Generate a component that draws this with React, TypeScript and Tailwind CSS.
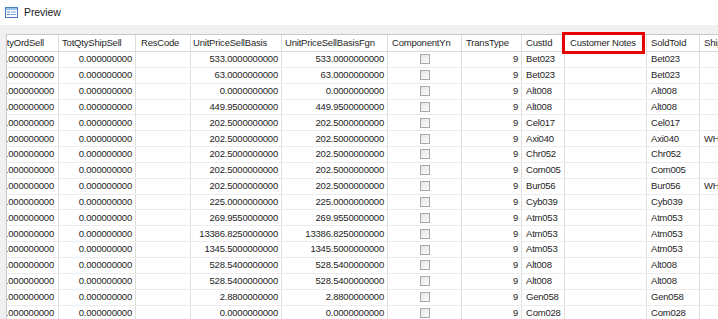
import React from "react";

type Row = {
  a: string;
  b: string;
  price: string;
  cust: string;
  ship?: string;
};

const rows: Row[] = [
  { a: "1.000000000", b: "0.000000000", price: "533.0000000000", cust: "Bet023" },
  { a: "1.000000000", b: "0.000000000", price: "63.0000000000", cust: "Bet023" },
  { a: "1.000000000", b: "0.000000000", price: "0.0000000000", cust: "Alt008" },
  { a: "1.000000000", b: "0.000000000", price: "449.9500000000", cust: "Alt008" },
  { a: "1.000000000", b: "0.000000000", price: "202.5000000000", cust: "Cel017" },
  { a: "1.000000000", b: "0.000000000", price: "202.5000000000", cust: "Axi040", ship: "WH01" },
  { a: "1.000000000", b: "0.000000000", price: "202.5000000000", cust: "Chr052" },
  { a: "1.000000000", b: "0.000000000", price: "202.5000000000", cust: "Com005" },
  { a: "1.000000000", b: "0.000000000", price: "202.5000000000", cust: "Bur056", ship: "WH01" },
  { a: "1.000000000", b: "0.000000000", price: "225.0000000000", cust: "Cyb039" },
  { a: "1.000000000", b: "0.000000000", price: "269.9550000000", cust: "Atm053" },
  { a: "1.000000000", b: "0.000000000", price: "13386.8250000000", cust: "Atm053" },
  { a: "1.000000000", b: "0.000000000", price: "1345.5000000000", cust: "Atm053" },
  { a: "1.000000000", b: "0.000000000", price: "528.5400000000", cust: "Alt008" },
  { a: "1.000000000", b: "0.000000000", price: "528.5400000000", cust: "Alt008" },
  { a: "1.000000000", b: "0.000000000", price: "2.8800000000", cust: "Gen058" },
  { a: "1.000000000", b: "0.000000000", price: "0.0000000000", cust: "Com028" },
];

const cell =
  "shrink-0 h-full border-r border-[#dedede] overflow-hidden whitespace-nowrap flex items-center";

function FormIcon() {
  return (
    <svg width="13" height="11" viewBox="0 0 13 11">
      <rect x="0.5" y="0.5" width="12" height="10" fill="#ffffff" stroke="#4a7fc1" />
      <rect x="1" y="1" width="11" height="2" fill="#9cc0e8" />
      <rect x="2" y="4.5" width="3" height="1" fill="#4a7fc1" />
      <rect x="2" y="7" width="3" height="1" fill="#4a7fc1" />
      <rect x="6" y="4.5" width="5" height="1" fill="#7aa4d6" />
      <rect x="6" y="7" width="5" height="1" fill="#7aa4d6" />
    </svg>
  );
}

function Checkbox() {
  return (
    <div className="w-[10px] h-[10px] border border-[#a8a8a8] bg-gradient-to-br from-[#e6e6e6] to-[#fbfbfb]" />
  );
}

export default function App() {
  return (
    <div
      className="relative w-[718px] h-[319px] overflow-hidden bg-[#f0f0f0] flex flex-col text-[#1e1e1e]"
      style={{ fontFamily: '"Liberation Sans", Arial, sans-serif' }}
    >
      <div className="h-[25px] shrink-0 bg-white flex items-center pl-[5px] gap-[6px]">
        <FormIcon />
        <span className="text-[10.5px] tracking-[-0.1px] text-[#1a1a1a]">Preview</span>
      </div>
      <div className="flex-1 pt-[9px] pl-[6px] overflow-hidden">
        <div className="bg-white border-l border-t border-[#c8c8c8] h-full overflow-hidden text-[9.5px] tracking-[-0.2px]">
          {/* header */}
          <div className="flex h-[17px] border-b border-[#dadada] text-[#262626]">
            <div className={`${cell} w-[52px] justify-end`}>
              <span className="pr-[14px]">TotQtyOrdSell</span>
            </div>
            <div className={`${cell} w-[77px] pl-[3px]`}>TotQtyShipSell</div>
            <div className={`${cell} w-[55px] pl-[5px]`}>ResCode</div>
            <div className={`${cell} w-[91px] pl-[2px]`}>UnitPriceSellBasis</div>
            <div className={`${cell} w-[106px] pl-[3px]`}>UnitPriceSellBasisFgn</div>
            <div className={`${cell} w-[74px] pl-[4px]`}>ComponentYn</div>
            <div className={`${cell} w-[60px] pl-[4px]`}>TransType</div>
            <div className={`${cell} w-[43px] pl-[4px]`}>CustId</div>
            <div className={`${cell} w-[82px] pl-[5px]`}>Customer Notes</div>
            <div className={`${cell} w-[53px] pl-[4px]`}>SoldToId</div>
            <div className={`${cell} w-[80px] pl-[4px]`}>ShipToAddr</div>
          </div>
          {rows.map((r, i) => (
            <div key={i} className="flex h-[15.85px] border-b border-[#ececec]">
              <div className={`${cell} w-[52px] justify-end pr-[4px]`}>{r.a}</div>
              <div className={`${cell} w-[77px] justify-end pr-[3px]`}>{r.b}</div>
              <div className={`${cell} w-[55px]`} />
              <div className={`${cell} w-[91px] justify-end pr-[3px]`}>{r.price}</div>
              <div className={`${cell} w-[106px] justify-end pr-[3px]`}>{r.price}</div>
              <div className={`${cell} w-[74px] justify-center`}>
                <Checkbox />
              </div>
              <div className={`${cell} w-[60px] justify-end pr-[3px]`}>9</div>
              <div className={`${cell} w-[43px] pl-[4px]`}>{r.cust}</div>
              <div className={`${cell} w-[82px]`} />
              <div className={`${cell} w-[53px] pl-[4px]`}>{r.cust}</div>
              <div className={`${cell} w-[80px] pl-[4px]`}>{r.ship ?? ""}</div>
            </div>
          ))}
        </div>
      </div>
      <div className="pointer-events-none absolute left-[562px] top-[32px] w-[83px] h-[22px] border-[3px] border-[#e60000]" />
    </div>
  );
}
